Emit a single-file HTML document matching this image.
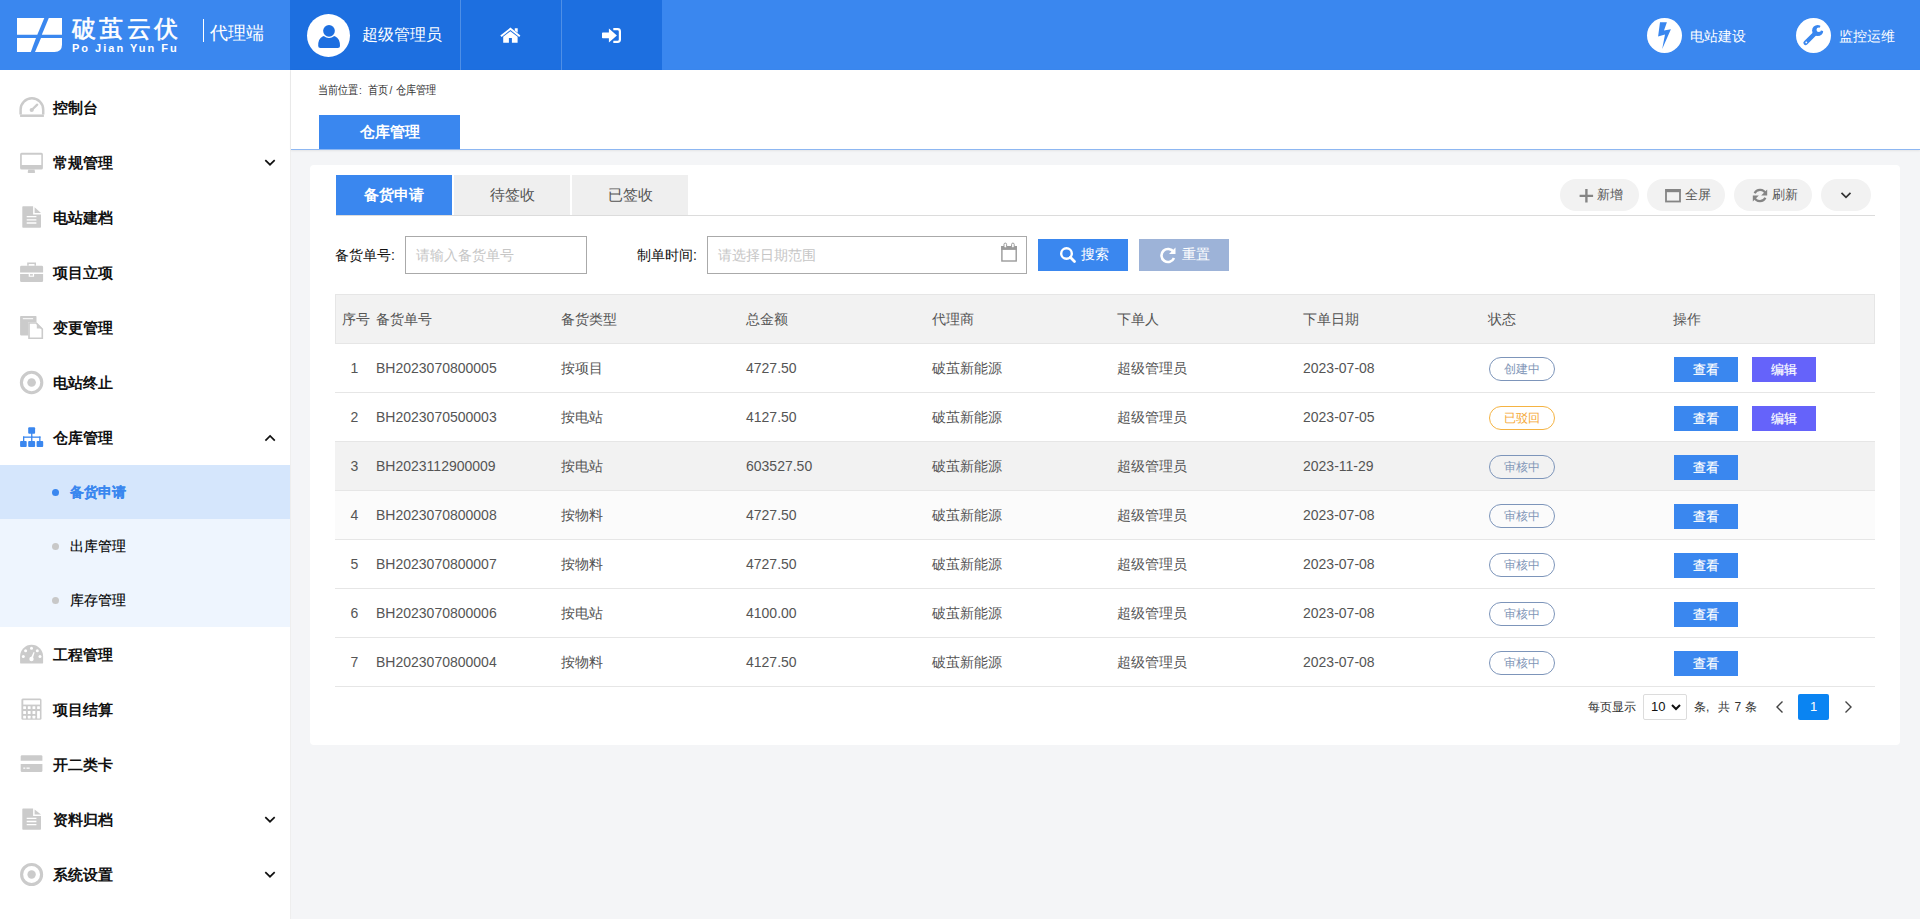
<!DOCTYPE html><html><head><meta charset="utf-8"><style>*{box-sizing:border-box;margin:0;padding:0}
html,body{width:1920px;height:919px;overflow:hidden}
body{position:relative;background:#f4f5f7;font-family:"Liberation Sans",sans-serif;color:#333}
.abs{position:absolute}
#hdr{left:0;top:0;width:1920px;height:70px;background:#3a87ef}
#user{left:290px;top:0;width:372px;height:70px;background:#1d6fe0}
.vl{position:absolute;top:0;width:1px;height:70px;background:#4f8fe6}
.wt{color:#fff;white-space:nowrap}
#side{left:0;top:70px;width:291px;height:849px;background:#fff;border-right:1px solid #eeeeee}
.mi{position:absolute;left:0;width:290px;height:55px}
.mi .ic{position:absolute;left:0;top:0}
.mi .tx{position:absolute;left:53px;top:0;line-height:55px;font-size:15px;font-weight:bold;color:#111;white-space:nowrap}
.mi .chev{position:absolute;left:263px;top:23px}
.si{position:absolute;left:0;width:290px;height:54px}
.si .dot{position:absolute;left:52px;top:24px;width:7px;height:7px;border-radius:50%;background:#c8c8c8}
.si .tx{position:absolute;left:70px;top:0;line-height:54px;font-size:14px;color:#000;white-space:nowrap;-webkit-text-stroke:0.15px currentColor}
#topbar{left:291px;top:70px;width:1629px;height:80px;background:#fff;border-bottom:1px solid #8db7f2;box-shadow:0 1px 2px rgba(0,0,0,0.07)}
#card{left:310px;top:165px;width:1590px;height:580px;background:#fff;border-radius:4px}
.tab{position:absolute;top:175px;width:116px;height:40px;background:#efefef;color:#555;font-size:15px;text-align:center;line-height:40px}
.tb{position:absolute;top:179px;height:32px;border-radius:16px;background:#f2f2f2;color:#555;font-size:13px;line-height:32px;white-space:nowrap}
.tb svg{position:absolute}
.tb span{position:absolute;top:0}
.row{position:absolute;left:335px;width:1540px;height:49px;border-bottom:1px solid #e6e6e6;font-size:14px;color:#555}
.row .c{position:absolute;top:0;line-height:48px;white-space:nowrap}
.badge{position:absolute;left:1154px;top:13px;width:66px;height:24px;border:1px solid #7d95ba;border-radius:12px;color:#8196b7;font-size:12px;line-height:22px;text-align:center}
.btn{position:absolute;top:13px;width:64px;height:25px;background:#3a87ef;color:#fff;font-size:13px;line-height:25px;text-align:center;-webkit-text-stroke:0.2px #fff}
.btn.ed{background:#6563fa}
.bc{top:81px;font-size:10px;line-height:16px;color:#333;white-space:nowrap;transform:scaleY(1.18);transform-origin:0 0}
.pg{top:698px;font-size:12px;line-height:18px;color:#333;white-space:nowrap}
</style></head><body>
<div id="hdr" class="abs"></div>
<svg class="abs" style="left:0;top:0" width="70" height="70" viewBox="0 0 70 70">
<g fill="#fff">
<polygon points="17,18 44.3,18 37.3,34.8 17,34.8"/>
<polygon points="48.8,18 62,18 62,34.8 41.8,34.8"/>
<polygon points="17,38 36,38 30.8,52 17,52"/>
<path d="M41,38 L62,38 L62,44.5 Q62,52 54.5,52 L35,52 Z"/>
</g></svg>
<div class="abs wt" id="lgt" style="left:72px;top:15px;font-size:24px;line-height:28px;letter-spacing:3.3px;-webkit-text-stroke:0.6px #fff">破茧云伏</div>
<div class="abs wt" id="lgs" style="left:72px;top:41px;font-size:11px;font-weight:bold;line-height:14px;letter-spacing:2px">Po Jian Yun Fu</div>
<div class="abs" style="left:203px;top:19px;width:1px;height:23px;background:#fff"></div>
<div class="abs wt" id="dld" style="left:210px;top:22px;font-size:18px;line-height:22px">代理端</div>
<div id="user" class="abs"></div>
<div class="vl" style="left:460px"></div>
<div class="vl" style="left:561px"></div>
<div class="abs" style="left:307px;top:14px;width:43px;height:43px;border-radius:50%;background:#fff"></div>
<svg class="abs" style="left:307px;top:14px" width="43" height="43" viewBox="0 0 43 43">
<path fill="#1d6fe0" d="M11.2,32 Q11,24.5 16,22.3 Q17.5,21.6 19,22.5 L22,23.8 L25,22.5 Q26.5,21.6 28,22.3 Q33,24.5 33,32 Q33,34.1 30.8,34.1 L13.4,34.1 Q11.2,34.1 11.2,32 Z"/>
<circle cx="22" cy="16.8" r="7.2" fill="#fff"/><circle cx="22" cy="16.8" r="5.85" fill="#1d6fe0"/>
</svg>
<div class="abs wt" id="uname" style="left:362px;top:24px;font-size:16px;line-height:22px">超级管理员</div>
<svg class="abs" style="left:499px;top:26px" width="22" height="18" viewBox="0 0 22 18">
<path fill="#fff" d="M11.4,1.6 L21.4,9.5 L20.2,10.9 L11.4,4 L2.6,10.9 L1.3,9.5 Z M15.8,2.2 L18.7,2.2 L18.7,6.7 L15.8,4.4 Z M4.2,10.7 L11.4,5.2 L18.6,10.7 L18.6,16.8 L12.9,16.8 L12.9,12.1 L9.9,12.1 L9.9,16.8 L4.2,16.8 Z"/>
</svg>
<svg class="abs" style="left:600px;top:26px" width="24" height="19" viewBox="0 0 24 19">
<path fill="#fff" d="M2.8,6.4 L8.9,6.4 L8.9,2.4 L16.9,9.5 L8.9,16.6 L8.9,12.2 L2.8,12.2 Q2,12.2 2,11.4 L2,7.2 Q2,6.4 2.8,6.4 Z"/>
<path fill="none" stroke="#fff" stroke-width="2.2" d="M13.3,3.1 L17.6,3.1 Q19.9,3.1 19.9,5.4 L19.9,13.6 Q19.9,15.9 17.6,15.9 L13.3,15.9"/>
</svg>
<div class="abs" style="left:1647px;top:18px;width:35px;height:35px;border-radius:50%;background:#fff"></div>
<svg class="abs" style="left:1647px;top:18px" width="35" height="35" viewBox="0 0 35 35">
<path fill="#3a87ef" d="M13,4.3 L19.9,4.3 L17,12.4 L23.9,11.2 L15.2,30.9 L18,16.5 L11.1,18.4 Z"/>
</svg>
<div class="abs wt" style="left:1690px;top:26px;font-size:14px;line-height:20px">电站建设</div>
<div class="abs" style="left:1796px;top:18px;width:35px;height:35px;border-radius:50%;background:#fff"></div>
<svg class="abs" style="left:1796px;top:18px" width="35" height="35" viewBox="0 0 35 35">
<g fill="#3a87ef"><circle cx="21.7" cy="12.5" r="5.6"/></g>
<path d="M19.5,15 L9.6,24.9" stroke="#3a87ef" stroke-width="4.4" stroke-linecap="round"/>
<circle cx="22.8" cy="11.8" r="2.3" fill="#fff"/>
<path d="M22.8,11.8 L25.2,6.3 L29,8 L28.4,13.6 Z" fill="#fff"/>
<circle cx="10.3" cy="24.4" r="0.9" fill="#fff"/>
</svg>
<div class="abs wt" style="left:1839px;top:26px;font-size:14px;line-height:20px">监控运维</div>
<div id="side" class="abs"></div>
<!-- 1 控制台 -->
<div class="mi" style="top:80px"><div class="tx">控制台</div></div>
<svg class="abs" style="left:16px;top:92px" width="30" height="30" viewBox="0 0 30 30"><g stroke="#cbcbcb" fill="none">
<path d="M4.6,22.6 L4.6,17.6 A11.3,11.3 0 0 1 27.2,17.6 L27.2,22.6" stroke-width="2.5"/><path d="M4.1,23.7 L27.9,23.7" stroke-width="2.5"/><path d="M15.7,18 L21.2,12.7" stroke-width="2.3" stroke-linecap="round"/></g><circle cx="15.7" cy="18" r="2.1" fill="#cbcbcb"/></svg>
<!-- 2 常规管理 -->
<div class="mi" style="top:135px"><div class="tx">常规管理</div></div>
<svg class="abs" style="left:16px;top:148px" width="30" height="30" viewBox="0 0 30 30"><g fill="#cbcbcb">
<path d="M5.6,4.8 L25.4,4.8 Q26.9,4.8 26.9,6.3 L26.9,20 Q26.9,21.5 25.4,21.5 L5.6,21.5 Q4.1,21.5 4.1,20 L4.1,6.3 Q4.1,4.8 5.6,4.8 Z M5.8,6.8 L5.8,17.1 L25.3,17.1 L25.3,6.8 Z" fill-rule="evenodd"/>
<path d="M12.3,21.5 L18.5,21.5 L19.1,24.2 Q19.1,25 18.3,25 L12.5,25 Q11.7,25 11.7,24.2 Z"/></g></svg>
<!-- 3 电站建档 -->
<div class="mi" style="top:190px"><div class="tx">电站建档</div></div>
<svg class="abs" style="left:16px;top:203px" width="30" height="30" viewBox="0 0 30 30"><g fill="#cbcbcb">
<path d="M7.1,3.3 L17.1,3.3 L17.1,11.6 L25,11.6 L25,24 Q25,24.8 24.2,24.8 L7.1,24.8 Q6.3,24.8 6.3,24 L6.3,4.1 Q6.3,3.3 7.1,3.3 Z"/><path d="M18.6,4.3 L25,10.1 L18.6,10.1 Z"/></g>
<g stroke="#fff" stroke-width="1.3"><path d="M10.7,13.6 L20.4,13.6 M10.7,16.8 L20.4,16.8 M10.7,20 L20.4,20"/></g></svg>
<!-- 4 项目立项 -->
<div class="mi" style="top:245px"><div class="tx">项目立项</div></div>
<svg class="abs" style="left:16px;top:257px" width="30" height="30" viewBox="0 0 30 30"><g fill="#cbcbcb">
<path d="M11.2,5.4 L20,5.4 L20,8.8 L18.5,8.8 L18.5,6.9 L12.7,6.9 L12.7,8.8 L11.2,8.8 Z"/>
<path d="M5.4,8.8 L25.8,8.8 Q27.1,8.8 27.1,10.1 L27.1,15.6 L4.1,15.6 L4.1,10.1 Q4.1,8.8 5.4,8.8 Z"/>
<path d="M4.1,17.1 L12.7,17.1 L12.7,19.8 L18.1,19.8 L18.1,17.1 L27.1,17.1 L27.1,23.7 Q27.1,25 25.8,25 L5.4,25 Q4.1,25 4.1,23.7 Z"/>
<rect x="13.9" y="17.1" width="3" height="1.5"/></g></svg>
<!-- 5 变更管理 -->
<div class="mi" style="top:300px"><div class="tx">变更管理</div></div>
<svg class="abs" style="left:16px;top:312px" width="30" height="30" viewBox="0 0 30 30">
<path fill="#cbcbcb" d="M4.9,4 L19.7,4 Q20.5,4 20.5,4.8 L20.5,10.2 L12.2,10.2 L12.2,23.4 L4.9,23.4 Q4.1,23.4 4.1,22.6 L4.1,4.8 Q4.1,4 4.9,4 Z"/>
<rect x="6.8" y="6.2" width="10.3" height="1" fill="#fff"/>
<path fill="#fff" stroke="#cbcbcb" stroke-width="1.6" d="M13,11 L20.2,11 L26.3,17.1 L26.3,26.3 L13,26.3 Z"/>
<path fill="#cbcbcb" d="M20.8,11 L26.3,16.5 L20.8,16.5 Z"/></svg>
<!-- 6 电站终止 -->
<div class="mi" style="top:355px"><div class="tx">电站终止</div></div>
<svg class="abs" style="left:16px;top:367px" width="30" height="30" viewBox="0 0 30 30"><circle cx="15.6" cy="15.5" r="10.2" fill="none" stroke="#cbcbcb" stroke-width="3.1"/><circle cx="15.6" cy="15.5" r="4.3" fill="#cbcbcb"/></svg>
<!-- 7 仓库管理 -->
<div class="mi" style="top:410px"><div class="tx">仓库管理</div></div>
<svg class="abs" style="left:16px;top:422px" width="30" height="30" viewBox="0 0 30 30"><g fill="#3a87ef">
<rect x="12.2" y="5.3" width="6.9" height="6.4" rx="1"/><rect x="15.1" y="11" width="1.3" height="4"/>
<rect x="7" y="14.5" width="17.5" height="1.3"/><rect x="7" y="14.5" width="1.3" height="5"/><rect x="15.1" y="14.5" width="1.3" height="5"/><rect x="23.2" y="14.5" width="1.3" height="5"/>
<rect x="4.1" y="19" width="6.6" height="5.9" rx="0.9"/><rect x="12.2" y="19" width="6.9" height="5.9" rx="0.9"/><rect x="20.6" y="19" width="6.6" height="5.9" rx="0.9"/></g></svg>
<svg class="abs" style="left:262px;top:156px" width="16" height="12" viewBox="0 0 16 12"><path d="M3.3,4.2 L8,8.7 L12.7,4.2" stroke="#111" stroke-width="1.7" fill="none"/></svg>
<svg class="abs" style="left:262px;top:432px" width="16" height="12" viewBox="0 0 16 12"><path d="M3.4,8.6 L8.1,4 L12.8,8.6" stroke="#111" stroke-width="1.7" fill="none"/></svg>
<!-- submenu -->
<div class="abs" style="left:0;top:465px;width:290px;height:162px;background:#eef5fe"></div>
<div class="abs" style="left:0;top:465px;width:290px;height:54px;background:#d5e6fc"></div>
<div class="si" style="top:465px"><div class="dot" style="background:#3a87ef"></div><div class="tx" style="color:#3a87ef;font-weight:bold">备货申请</div></div>
<div class="si" style="top:519px"><div class="dot"></div><div class="tx">出库管理</div></div>
<div class="si" style="top:573px"><div class="dot"></div><div class="tx">库存管理</div></div>
<!-- 8 工程管理 -->
<div class="mi" style="top:627px"><div class="tx">工程管理</div></div>
<svg class="abs" style="left:16px;top:639px" width="30" height="30" viewBox="0 0 30 30"><path fill="#cbcbcb" d="M4.1,17.3 A11.5,11.5 0 0 1 27.1,17.3 L27.1,23.4 Q27.1,24.6 25.9,24.6 L5.3,24.6 Q4.1,24.6 4.1,23.4 Z"/>
<g fill="#fff"><circle cx="9.6" cy="11.7" r="1.5"/><circle cx="15.5" cy="9.2" r="1.5"/><circle cx="21.3" cy="11.7" r="1.5"/><circle cx="7.3" cy="17.6" r="1.5"/><circle cx="24" cy="17.6" r="1.5"/><circle cx="15.5" cy="20" r="2.2"/><path d="M14.6,19.6 L17.6,13 L18.6,13.4 L16.4,20.4 Z"/></g></svg>
<!-- 9 项目结算 -->
<div class="mi" style="top:682px"><div class="tx">项目结算</div></div>
<svg class="abs" style="left:16px;top:694px" width="30" height="30" viewBox="0 0 30 30"><rect x="5.4" y="4.5" width="20.1" height="21.3" rx="1.5" fill="#cbcbcb"/>
<g fill="#fff"><rect x="7.3" y="6.2" width="16.7" height="4.4"/><rect x="7.2" y="12.3" width="2.8" height="2.8" rx="0.5"/><rect x="7.2" y="17.1" width="2.8" height="2.8" rx="0.5"/><rect x="7.2" y="21.8" width="2.8" height="2.8" rx="0.5"/><rect x="11.8" y="12.3" width="2.8" height="2.8" rx="0.5"/><rect x="11.8" y="17.1" width="2.8" height="2.8" rx="0.5"/><rect x="11.8" y="21.8" width="2.8" height="2.8" rx="0.5"/><rect x="16.5" y="12.3" width="2.8" height="2.8" rx="0.5"/><rect x="16.5" y="17.1" width="2.8" height="2.8" rx="0.5"/><rect x="16.5" y="21.8" width="2.8" height="2.8" rx="0.5"/><rect x="21.1" y="12.3" width="2.8" height="2.8" rx="0.5"/><rect x="21.1" y="17.1" width="2.8" height="7.5" rx="0.5"/></g></svg>
<!-- 10 开二类卡 -->
<div class="mi" style="top:737px"><div class="tx">开二类卡</div></div>
<svg class="abs" style="left:16px;top:749px" width="30" height="30" viewBox="0 0 30 30"><g fill="#cbcbcb"><path d="M6,6.3 L25.1,6.3 Q26.4,6.3 26.4,7.6 L26.4,11.7 L4.7,11.7 L4.7,7.6 Q4.7,6.3 6,6.3 Z"/><path d="M4.7,14.9 L26.4,14.9 L26.4,21.7 Q26.4,23 25.1,23 L6,23 Q4.7,23 4.7,21.7 Z"/></g>
<g fill="#fff"><rect x="7.3" y="18.5" width="2" height="1.3"/><rect x="10.5" y="18.5" width="3.2" height="1.3"/></g></svg>
<!-- 11 资料归档 -->
<div class="mi" style="top:792px"><div class="tx">资料归档</div></div>
<svg class="abs" style="left:16px;top:805px" width="30" height="30" viewBox="0 0 30 30"><g fill="#cbcbcb">
<path d="M7.1,3.5 L17.1,3.5 L17.1,11.1 L25,11.1 L25,24 Q25,24.8 24.2,24.8 L7.1,24.8 Q6.3,24.8 6.3,24 L6.3,4.3 Q6.3,3.5 7.1,3.5 Z"/><path d="M18.6,4.5 L25,9.6 L18.6,9.6 Z"/></g>
<g stroke="#fff" stroke-width="1.3"><path d="M10.7,13.3 L20.4,13.3 M10.7,16.5 L20.4,16.5 M10.7,19.6 L20.4,19.6"/></g></svg>
<svg class="abs" style="left:262px;top:813px" width="16" height="12" viewBox="0 0 16 12"><path d="M3.3,4.2 L8,8.7 L12.7,4.2" stroke="#111" stroke-width="1.7" fill="none"/></svg>
<!-- 12 系统设置 -->
<div class="mi" style="top:847px"><div class="tx">系统设置</div></div>
<svg class="abs" style="left:16px;top:859px" width="30" height="30" viewBox="0 0 30 30"><circle cx="15.6" cy="15.5" r="10" fill="none" stroke="#cbcbcb" stroke-width="3.1"/><circle cx="15.6" cy="15.5" r="4.2" fill="#cbcbcb"/></svg>
<svg class="abs" style="left:262px;top:868px" width="16" height="12" viewBox="0 0 16 12"><path d="M3.3,4.2 L8,8.7 L12.7,4.2" stroke="#111" stroke-width="1.7" fill="none"/></svg>
<div id="topbar" class="abs"></div>
<div class="abs bc" style="left:318px">当前位置</div><div class="abs bc" style="left:359px">:</div><div class="abs bc" style="left:368px">首页</div><div class="abs bc" style="left:389.5px">/</div><div class="abs bc" style="left:396px">仓库管理</div>
<div class="abs" style="left:319px;top:115px;width:141px;height:34px;background:#3a87ef;color:#fff;font-size:15px;font-weight:bold;text-align:center;line-height:34px">仓库管理</div>
<div id="card" class="abs"></div>
<div class="tab" style="left:336px;background:#3a87ef;color:#fff;font-weight:bold">备货申请</div>
<div class="tab" style="left:454px">待签收</div>
<div class="tab" style="left:572px">已签收</div>
<div class="abs" style="left:336px;top:215px;width:1539px;height:1px;background:#dcdcdc"></div>
<!-- toolbar -->
<div class="tb" style="left:1560px;width:79px"><svg style="left:18px;top:9px" width="16" height="16" viewBox="0 0 16 16"><path d="M8.4,1.1 L8.4,14.6 M1.6,7.9 L15.1,7.9" stroke="#858585" stroke-width="2.4"/></svg><span style="left:37px">新增</span></div>
<div class="tb" style="left:1647px;width:78px"><svg style="left:17px;top:9px" width="18" height="16" viewBox="0 0 18 16"><rect x="2" y="1.9" width="14" height="11.6" fill="none" stroke="#858585" stroke-width="1.8"/><rect x="1.5" y="1.2" width="15" height="3" fill="#858585"/></svg><span style="left:38px">全屏</span></div>
<div class="tb" style="left:1734px;width:78px"><svg style="left:17px;top:8px" width="18" height="17" viewBox="0 0 18 17"><g fill="none" stroke="#858585" stroke-width="2.2"><path d="M14.6,6.6 A6,6 0 0 0 3.6,6.2"/><path d="M3.4,10.4 A6,6 0 0 0 14.4,10.8"/></g><g fill="#858585"><path d="M16.2,2.4 L16.2,8.4 L10.2,8.4 Z"/><path d="M1.8,14.6 L1.8,8.6 L7.8,8.6 Z"/></g></svg><span style="left:38px">刷新</span></div>
<div class="tb" style="left:1821px;width:50px"><svg style="left:18px;top:10px" width="14" height="12" viewBox="0 0 14 12"><path d="M2.5,3.8 L7,8.3 L11.5,3.8" stroke="#333" stroke-width="1.7" fill="none"/></svg></div>
<!-- search -->
<div class="abs" style="left:335px;top:245px;font-size:14px;line-height:20px;color:#111;white-space:nowrap">备货单号:</div>
<div class="abs" style="left:405px;top:236px;width:182px;height:38px;border:1px solid #aaa;background:#fff"></div>
<div class="abs" style="left:416px;top:245px;font-size:14px;line-height:20px;color:#c6c6c6;white-space:nowrap">请输入备货单号</div>
<div class="abs" style="left:637px;top:245px;font-size:14px;line-height:20px;color:#111;white-space:nowrap">制单时间:</div>
<div class="abs" style="left:707px;top:236px;width:320px;height:38px;border:1px solid #aaa;background:#fff"></div>
<div class="abs" style="left:718px;top:245px;font-size:14px;line-height:20px;color:#c6c6c6;white-space:nowrap">请选择日期范围</div>
<svg class="abs" style="left:999px;top:241px" width="20" height="22" viewBox="0 0 20 22"><rect x="2.9" y="5.7" width="14.3" height="14.3" fill="none" stroke="#9a9a9a" stroke-width="1.4"/><rect x="2.2" y="5" width="15.7" height="3.9" fill="#9a9a9a"/>
<g fill="#fff" stroke="#9a9a9a" stroke-width="1"><rect x="5" y="2.1" width="2.6" height="4.8" rx="1.3"/><rect x="12.6" y="2.1" width="2.6" height="4.8" rx="1.3"/></g></svg>
<div class="abs" style="left:1038px;top:239px;width:90px;height:32px;background:#3a87ef"></div>
<svg class="abs" style="left:1059px;top:246px" width="18" height="18" viewBox="0 0 18 18"><circle cx="7.5" cy="7.5" r="5.3" fill="none" stroke="#fff" stroke-width="2.4"/><path d="M11.3,11.3 L15.5,15.5" stroke="#fff" stroke-width="2.8" stroke-linecap="round"/></svg>
<div class="abs" style="left:1081px;top:244px;font-size:14px;line-height:20px;color:#fff;white-space:nowrap">搜索</div>
<div class="abs" style="left:1139px;top:239px;width:90px;height:32px;background:#9db3d8"></div>
<svg class="abs" style="left:1158px;top:245px" width="20" height="20" viewBox="0 0 20 20"><path d="M15.5,7 A6.5,6.5 0 1 0 16,13" fill="none" stroke="#fff" stroke-width="2.6"/><path d="M17.5,2.5 L17.5,9 L11,9 Z" fill="#fff"/></svg>
<div class="abs" style="left:1182px;top:244px;font-size:14px;line-height:20px;color:#fff;white-space:nowrap">重置</div>
<div class="abs" style="left:335px;top:294px;width:1540px;height:50px;background:#f2f2f2;border:1px solid #e6e6e6"></div>
<div class="row" style="top:294px;height:50px;border:none">
<div class="c" style="left:7px;line-height:50px">序号</div>
<div class="c" style="left:41px;line-height:50px">备货单号</div>
<div class="c" style="left:226px;line-height:50px">备货类型</div>
<div class="c" style="left:411px;line-height:50px">总金额</div>
<div class="c" style="left:597px;line-height:50px">代理商</div>
<div class="c" style="left:782px;line-height:50px">下单人</div>
<div class="c" style="left:968px;line-height:50px">下单日期</div>
<div class="c" style="left:1153px;line-height:50px">状态</div>
<div class="c" style="left:1338px;line-height:50px">操作</div>
</div>
<div class="row" style="top:344px;">
<div class="c" style="left:0;width:39px;text-align:center">1</div>
<div class="c" style="left:41px">BH2023070800005</div>
<div class="c" style="left:226px">按项目</div>
<div class="c" style="left:411px">4727.50</div>
<div class="c" style="left:597px">破茧新能源</div>
<div class="c" style="left:782px">超级管理员</div>
<div class="c" style="left:968px">2023-07-08</div>
<div class="badge">创建中</div>
<div class="btn" style="left:1339px">查看</div>
<div class="btn ed" style="left:1417px">编辑</div>
</div>
<div class="row" style="top:393px;">
<div class="c" style="left:0;width:39px;text-align:center">2</div>
<div class="c" style="left:41px">BH2023070500003</div>
<div class="c" style="left:226px">按电站</div>
<div class="c" style="left:411px">4127.50</div>
<div class="c" style="left:597px">破茧新能源</div>
<div class="c" style="left:782px">超级管理员</div>
<div class="c" style="left:968px">2023-07-05</div>
<div class="badge" style="border-color:#f5b342;color:#f5a835">已驳回</div>
<div class="btn" style="left:1339px">查看</div>
<div class="btn ed" style="left:1417px">编辑</div>
</div>
<div class="row" style="top:442px;background:#f2f2f2;">
<div class="c" style="left:0;width:39px;text-align:center">3</div>
<div class="c" style="left:41px">BH2023112900009</div>
<div class="c" style="left:226px">按电站</div>
<div class="c" style="left:411px">603527.50</div>
<div class="c" style="left:597px">破茧新能源</div>
<div class="c" style="left:782px">超级管理员</div>
<div class="c" style="left:968px">2023-11-29</div>
<div class="badge">审核中</div>
<div class="btn" style="left:1339px">查看</div>
</div>
<div class="row" style="top:491px;background:#fbfbfb;">
<div class="c" style="left:0;width:39px;text-align:center">4</div>
<div class="c" style="left:41px">BH2023070800008</div>
<div class="c" style="left:226px">按物料</div>
<div class="c" style="left:411px">4727.50</div>
<div class="c" style="left:597px">破茧新能源</div>
<div class="c" style="left:782px">超级管理员</div>
<div class="c" style="left:968px">2023-07-08</div>
<div class="badge">审核中</div>
<div class="btn" style="left:1339px">查看</div>
</div>
<div class="row" style="top:540px;">
<div class="c" style="left:0;width:39px;text-align:center">5</div>
<div class="c" style="left:41px">BH2023070800007</div>
<div class="c" style="left:226px">按物料</div>
<div class="c" style="left:411px">4727.50</div>
<div class="c" style="left:597px">破茧新能源</div>
<div class="c" style="left:782px">超级管理员</div>
<div class="c" style="left:968px">2023-07-08</div>
<div class="badge">审核中</div>
<div class="btn" style="left:1339px">查看</div>
</div>
<div class="row" style="top:589px;">
<div class="c" style="left:0;width:39px;text-align:center">6</div>
<div class="c" style="left:41px">BH2023070800006</div>
<div class="c" style="left:226px">按电站</div>
<div class="c" style="left:411px">4100.00</div>
<div class="c" style="left:597px">破茧新能源</div>
<div class="c" style="left:782px">超级管理员</div>
<div class="c" style="left:968px">2023-07-08</div>
<div class="badge">审核中</div>
<div class="btn" style="left:1339px">查看</div>
</div>
<div class="row" style="top:638px;">
<div class="c" style="left:0;width:39px;text-align:center">7</div>
<div class="c" style="left:41px">BH2023070800004</div>
<div class="c" style="left:226px">按物料</div>
<div class="c" style="left:411px">4127.50</div>
<div class="c" style="left:597px">破茧新能源</div>
<div class="c" style="left:782px">超级管理员</div>
<div class="c" style="left:968px">2023-07-08</div>
<div class="badge">审核中</div>
<div class="btn" style="left:1339px">查看</div>
</div>
<div class="abs" style="left:1588px;top:698px;font-size:12px;line-height:18px;color:#333;white-space:nowrap">每页显示</div>
<div class="abs" style="left:1643px;top:694px;width:44px;height:26px;border:1px solid #dcdcdc;border-radius:2px;background:#fff"></div>
<div class="abs" style="left:1651px;top:698px;font-size:13px;line-height:18px;color:#111">10</div>
<svg class="abs" style="left:1670px;top:701px" width="12" height="12" viewBox="0 0 12 12"><path d="M2,4 L6,8 L10,4" stroke="#111" stroke-width="2" fill="none"/></svg>
<div class="abs pg" style="left:1694px">条</div><div class="abs pg" style="left:1706px">,</div><div class="abs pg" style="left:1718px">共</div><div class="abs pg" style="left:1734.5px">7</div><div class="abs pg" style="left:1745px">条</div>
<svg class="abs" style="left:1773px;top:699px" width="14" height="16" viewBox="0 0 14 16"><path d="M9.5,2.5 L4,8 L9.5,13.5" stroke="#444" stroke-width="1.4" fill="none"/></svg>
<div class="abs" style="left:1798px;top:694px;width:31px;height:26px;border-radius:2px;background:#0a84f2;color:#fff;font-size:13px;line-height:26px;text-align:center">1</div>
<svg class="abs" style="left:1841px;top:699px" width="14" height="16" viewBox="0 0 14 16"><path d="M4.5,2.5 L10,8 L4.5,13.5" stroke="#444" stroke-width="1.4" fill="none"/></svg>
</body></html>
